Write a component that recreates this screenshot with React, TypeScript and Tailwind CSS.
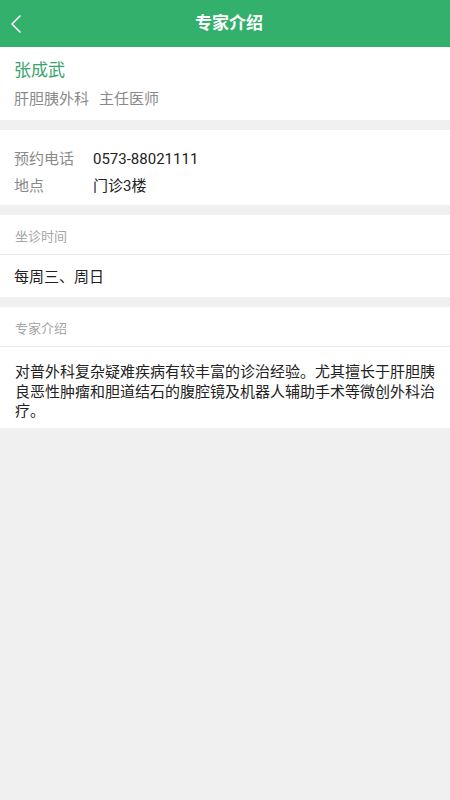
const font = { fontFamily: '"Roboto", "Noto Sans CJK SC", sans-serif' };

function BackIcon() {
  return (
    <svg width="12" height="20" viewBox="0 0 12 20" fill="none" stroke="white" strokeWidth={1.6}>
      <path d="M10 2 L2 10 L10 18" strokeLinecap="round" strokeLinejoin="round" />
    </svg>
  );
}

function SectionTitle({ children }: { children: string }) {
  return (
    <div className="h-[40px] flex items-center px-[15px] pt-[4px] text-[13px] text-[#a5a5a5] border-b border-[#e8e8e8]">
      {children}
    </div>
  );
}

export default function App() {
  return (
    <div className="w-[450px] h-[800px] bg-[#f0f0f0] flex flex-col" style={font}>
      {/* Header */}
      <div className="relative h-[47px] bg-[#33b06b] flex items-center justify-center pl-[8px]">
        <button type="button" className="absolute left-[10px] top-[14px]">
          <BackIcon />
        </button>
        <span className="text-[17px] font-bold text-white">专家介绍</span>
      </div>

      {/* Doctor */}
      <div className="bg-white h-[73px] px-[14px] pt-[11px]">
        <div className="text-[17px] leading-[24px] text-[#36a56b]">张成武</div>
        <div className="mt-[7px] text-[15px] leading-[20px] text-[#8a8a8a]">
          肝胆胰外科<span className="ml-[10px]">主任医师</span>
        </div>
      </div>

      {/* Contact */}
      <div className="mt-[10px] bg-white h-[75px] px-[14px] pt-[16px] text-[15px] leading-[27px]">
        <div className="flex">
          <span className="w-[79px] text-[#8a8a8a]">预约电话</span>
          <span className="text-[#222]">0573-88021111</span>
        </div>
        <div className="flex">
          <span className="w-[79px] text-[#8a8a8a]">地点</span>
          <span className="text-[#222]">门诊3楼</span>
        </div>
      </div>

      {/* Schedule */}
      <div className="mt-[10px] bg-white">
        <SectionTitle>坐诊时间</SectionTitle>
        <div className="h-[42px] flex items-center px-[14px] pt-[3px] text-[15px] text-[#222]">每周三、周日</div>
      </div>

      {/* Intro */}
      <div className="mt-[10px] bg-white">
        <SectionTitle>专家介绍</SectionTitle>
        <p className="px-[15px] pt-[16px] pb-[6px] text-[15px] leading-[19.5px] text-[#222]">
          对普外科复杂疑难疾病有较丰富的诊治经验。尤其擅长于肝胆胰良恶性肿瘤和胆道结石的腹腔镜及机器人辅助手术等微创外科治疗。
        </p>
      </div>
    </div>
  );
}
